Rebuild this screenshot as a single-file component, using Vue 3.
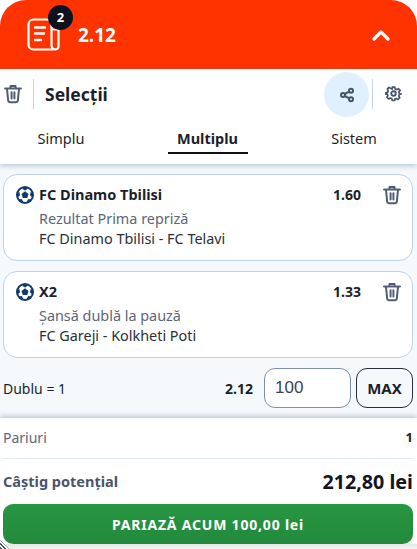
<script setup>
const selections = [
  { name: 'FC Dinamo Tbilisi', odd: '1.60', market: 'Rezultat Prima repriză', match: 'FC Dinamo Tbilisi - FC Telavi' },
  { name: 'X2', odd: '1.33', market: 'Șansă dublă la pauză', match: 'FC Gareji - Kolkheti Poti' },
]
const tabs = ['Simplu', 'Multiplu', 'Sistem']
</script>

<template>
  <div class="slip">
    <header class="head">
      <div class="head-icon">
        <svg width="33" height="33" viewBox="0 0 33 33" fill="none" stroke="#fff" stroke-width="2.200" stroke-linecap="round" stroke-linejoin="round">
          <path d="M26 31.500H6.500A5 5 0 0 1 1.500 26.500V6.500a5 5 0 0 1 5-5H19.500a5 5 0 0 1 5 5V27a4.500 4.500 0 0 0 4 4.500 3.500 3.500 0 0 0 3-3.500V11.500H24.500" />
          <path d="M8 9.500h10M8 15.500h9M8 22h6" stroke-width="2.400" />
        </svg>
        <span class="badge">2</span>
      </div>
      <span class="head-odd">2.12</span>
      <svg class="chevron" width="20" height="14" viewBox="0 0 20 14" fill="none" stroke="#fff" stroke-width="3.200" stroke-linecap="round" stroke-linejoin="round">
        <path d="M3 11l7-7 7 7" />
      </svg>
    </header>

    <div class="top">
      <div class="toolbar">
        <svg class="trash" width="20" height="20" viewBox="0 0 24 24" fill="none" stroke="#525c72" stroke-width="2.400" stroke-linecap="round" stroke-linejoin="round">
          <path d="M2.500 5.500h19M9 5V2.500h6V5M4.800 6l1.400 14a2 2 0 0 0 2 1.800h7.600a2 2 0 0 0 2-1.800L19.200 6M10.300 10v7.500M13.700 10v7.500" />
        </svg>
        <span class="sep"></span>
        <span class="title">Selecții</span>
        <span class="share">
          <svg width="16" height="16" viewBox="0 0 24 24" fill="none" stroke="#47536b" stroke-width="3">
            <circle cx="18" cy="5.500" r="3" /><circle cx="6" cy="12" r="3" /><circle cx="18" cy="18.500" r="3" />
            <path d="M8.700 10.500l6.600-3.500M8.700 13.500l6.600 3.500" />
          </svg>
        </span>
        <span class="sep sep-right"></span>
        <svg class="gear" width="17" height="17" viewBox="0 0 24 24" fill="none" stroke="#47536b" stroke-width="2.600" stroke-linejoin="round">
          <circle cx="12" cy="12" r="3.200" />
          <path d="M10 2h4l.6 3 2.400 1 2.600-1.600 2.800 2.800L20.200 9.800l1 2.200 2.800.7v0l-2.800.9-1 2.400 1.600 2.600-2.800 2.800-2.600-1.600-2.400 1L14 23h-4l-.6-3-2.400-1-2.600 1.600-2.800-2.800 1.600-2.600-1-2.400L0 13v-2l2.800-.7 1-2.500L2.200 5.200 5 2.400l2.600 1.600L10 5z" transform="translate(1.200 1.200) scale(.9)" />
        </svg>
      </div>
      <nav class="tabs">
        <span v-for="t in tabs" :key="t" class="tab" :class="{ active: t === 'Multiplu' }">{{ t }}</span>
      </nav>
    </div>

    <main class="list">
      <article v-for="s in selections" :key="s.name" class="card">
        <div class="card-head">
          <svg class="ball" width="18" height="18" viewBox="0 0 18 18">
            <circle cx="9" cy="9" r="9" fill="#0f3b6e" />
            <circle cx="9" cy="9" r="6.900" fill="#fff" />
            <path d="M9 5.300l3.500 2.600-1.300 4.100H6.800L5.500 7.900z" fill="#0f3b6e" />
            <path d="M9 1l3 1.700L9 4.500 6 2.700zM17 7.500l-.3 3.800-2.700-1.900.6-3.400zM1 7.500l.3 3.800L4 9.400l-.6-3.400zM4.700 16.200l-2-2.800 3.100-.5 1.500 3.100zM13.300 16.200l2-2.800-3.100-.5-1.500 3.100z" fill="#0f3b6e" />
          </svg>
          <span class="pick">{{ s.name }}</span>
          <span class="odd">{{ s.odd }}</span>
          <svg class="trash" width="20" height="20" viewBox="0 0 24 24" fill="none" stroke="#525c72" stroke-width="2.400" stroke-linecap="round" stroke-linejoin="round">
            <path d="M2.500 5.500h19M9 5V2.500h6V5M4.800 6l1.400 14a2 2 0 0 0 2 1.800h7.600a2 2 0 0 0 2-1.800L19.200 6M10.300 10v7.500M13.700 10v7.500" />
          </svg>
        </div>
        <div class="market">{{ s.market }}</div>
        <div class="match">{{ s.match }}</div>
      </article>

      <div class="stake">
        <span class="stake-label">Dublu = 1</span>
        <span class="stake-odd">2.12</span>
        <span class="input">100</span>
        <span class="max">MAX</span>
      </div>
    </main>

    <footer class="summary">
      <div class="row row-bets">
        <span class="bets">Pariuri</span>
        <b class="bets-val">1</b>
      </div>
      <div class="row row-win">
        <span class="win">Câștig potențial</span>
        <b class="win-val">212,80 lei</b>
      </div>
      <button class="place">PARIAZĂ ACUM 100,00 lei</button>
    </footer>
    <span class="grip"></span>
  </div>
</template>

<style scoped>
.slip {
  position: relative;
  width: 417px;
  height: 549px;
  display: flex;
  flex-direction: column;
  overflow: hidden;
  background: #fff;
  font-family: "Noto Sans", "Open Sans", sans-serif;
  color: #1c1f2a;
}
.head {
  height: 69px;
  flex: none;
  display: flex;
  align-items: center;
  padding: 0 27px;
  background: #ff3300;
  border-radius: 26px 26px 0 0;
  box-sizing: border-box;
}
.head-icon {
  position: relative;
  width: 33px;
  height: 33px;
  margin-right: 18px;
}
.badge {
  position: absolute;
  top: -13px;
  left: 21px;
  width: 25px;
  height: 25px;
  border-radius: 50%;
  background: #0d1220;
  color: #fff;
  font-size: 13px;
  font-weight: 700;
  line-height: 25px;
  text-align: center;
}
.head-odd {
  color: #fff;
  font-size: 19px;
  font-weight: 700;
  flex: 1;
}
.chevron {
  margin-right: -1px;
}
.top {
  flex: none;
  background: #fff;
  height: 95px;
  box-shadow: 0 2px 5px rgba(80, 110, 150, 0.35);
  position: relative;
}
.toolbar {
  height: 49px;
  display: flex;
  align-items: center;
  padding-left: 3px;
  padding-right: 15px;
}
.sep {
  width: 1px;
  height: 30px;
  background: #c6d3e4;
  margin: 0 11px 0 10px;
}
.title {
  font-size: 17.500px;
  font-weight: 700;
  flex: 1;
}
.share {
  width: 45px;
  height: 45px;
  border-radius: 50%;
  background: #e1f0fe;
  display: flex;
  align-items: center;
  justify-content: center;
  margin-top: 2px;
}
.sep-right {
  margin: 0 12px 0 3px;
}
.tabs {
  display: flex;
  height: 46px;
  padding: 0 23px 0 21px;
  justify-content: space-between;
}
.tab {
  font-size: 14.500px;
  line-height: 40px;
  width: 80px;
  text-align: center;
  box-sizing: border-box;
}
.active {
  font-weight: 700;
  border-bottom: 2px solid #111;
  height: 36px;
}
.list {
  flex: 1;
  background: #f5f9fc;
  padding: 10px 4px 0 3px;
  display: flex;
  flex-direction: column;
  gap: 10px;
}
.card {
  height: 87px;
  box-sizing: border-box;
  background: #fff;
  border: 1px solid #bdd2ee;
  border-radius: 14px;
  padding: 10px 10px 0 12px;
}
.card-head {
  display: flex;
  align-items: center;
  height: 20px;
  margin-bottom: 4px;
}
.ball {
  margin-right: 5px;
}
.pick {
  flex: 1;
  font-size: 14.500px;
  font-weight: 700;
  margin-top: -2px;
}
.odd {
  font-size: 14px;
  font-weight: 700;
  margin-right: 21px;
  margin-top: -2px;
}
.market {
  font-size: 14.400px;
  line-height: 20px;
  color: #5c667a;
  padding-left: 23px;
}
.match {
  font-size: 14.400px;
  line-height: 20px;
  color: #2a2e38;
  padding-left: 23px;
}
.stake {
  display: flex;
  align-items: center;
}
.stake-label {
  flex: 1;
  font-size: 14px;
}
.stake-odd {
  font-size: 14px;
  font-weight: 700;
  margin-right: 11px;
}
.input {
  width: 87px;
  height: 40px;
  box-sizing: border-box;
  background: #fff;
  border: 1px solid #7f8fb0;
  border-radius: 11px;
  font-family: "Liberation Sans", sans-serif;
  font-size: 17px;
  line-height: 38px;
  padding-left: 10px;
  color: #3c4352;
  margin-right: 5px;
}
.max {
  width: 57px;
  height: 40px;
  box-sizing: border-box;
  border: 1px solid #2a2e38;
  border-radius: 11px;
  text-align: center;
  font-size: 15px;
  font-weight: 700;
  line-height: 38px;
}
.summary {
  flex: none;
  height: 131px;
  background: linear-gradient(#fff 126px, #e6e6e6 126px, #f4f4f4);
  box-shadow: 0 -2px 5px rgba(80, 100, 140, 0.35);
  padding: 0 4px 0 3px;
  position: relative;
  box-sizing: border-box;
}
.row {
  display: flex;
  align-items: center;
  justify-content: space-between;
}
.row-bets {
  height: 41px;
  padding-bottom: 2px;
  border-bottom: 1px solid #dfeaf3;
  box-sizing: border-box;
}
.row-win {
  height: 45px;
}
.bets {
  font-size: 14px;
  color: #5c667a;
}
.bets-val {
  font-size: 13px;
}
.win {
  font-size: 14.500px;
  font-weight: 700;
  color: #4a556c;
  margin-top: -2px;
}
.win-val {
  font-size: 19.700px;
  color: #14161f;
}
.place {
  display: block;
  width: 100%;
  height: 40px;
  border: none;
  border-radius: 10px;
  background: linear-gradient(#279642, #228a3c);
  color: #fff;
  font-family: inherit;
  font-size: 14px;
  letter-spacing: 0.800px;
  font-weight: 700;
}
.grip {
  position: absolute;
  left: 0;
  bottom: 0;
  width: 9px;
  height: 9px;
  background: repeating-linear-gradient(45deg, #4a556c 0 1.500px, #fff 1.500px 3px);
  clip-path: polygon(0 0, 100% 100%, 0 100%);
}
</style>
